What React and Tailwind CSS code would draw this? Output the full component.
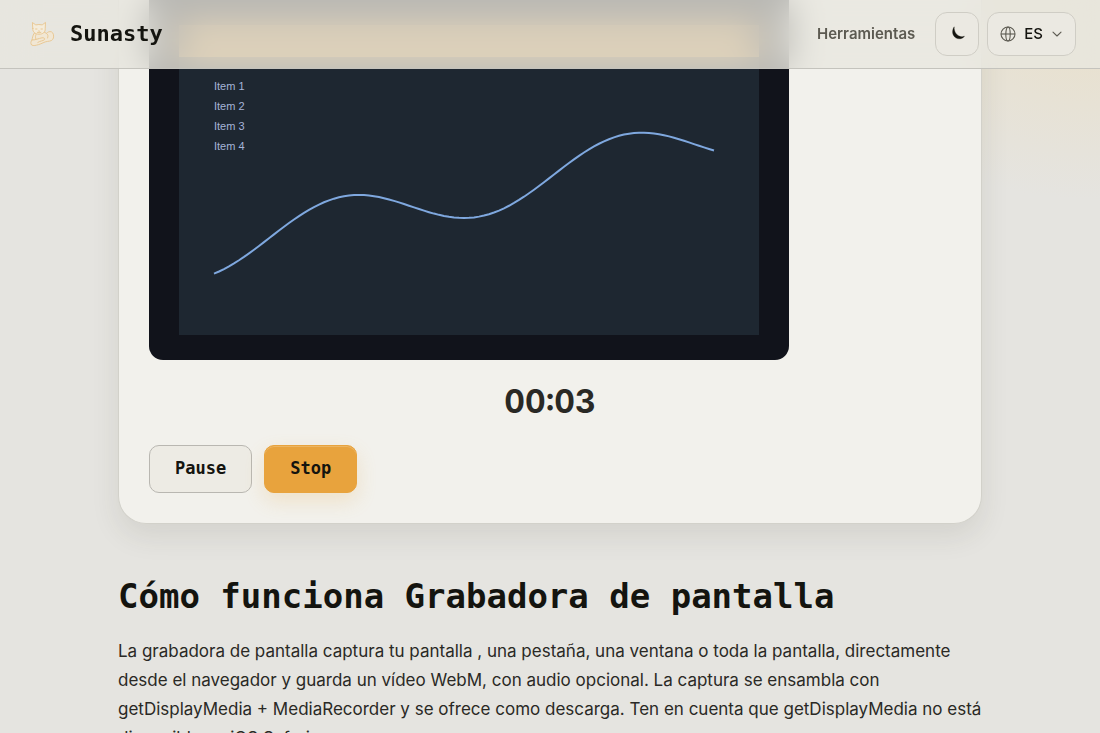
const MENU_ITEMS = ["Item 1", "Item 2", "Item 3", "Item 4"];

const WAVE_POINTS = Array.from({ length: 101 }, (_, i) => {
  const u = i * 5;
  const y = 249.9 - 0.22 * u - 25.1 * Math.sin(0.0222 * u - 1.24);
  return `${u + 2},${(y - 120).toFixed(2)}`;
}).join(" ");

function CatLogo() {
  return (
    <svg viewBox="0 0 28 28" className="size-7" fill="none" stroke="#e8c48c" strokeWidth="0.9" strokeLinecap="round" strokeLinejoin="round" aria-hidden="true">
      <path d="M6 13.500C4.500 16 4.500 18 4 20c-1.200 1.400-1.600 3.600-.4 5 1.800 1.200 4.600.2 7-.4 3.500-1 5.500-2.800 9-3.200 3-.3 5-.8 5.800-3.400.7-2.600-.2-5.400-2-6.200-2-.6-3.800.2-4.800 1.600L16 12Z" fill="#f1e7d4" />
      <path d="M4.800 8.500 4.400 2.500 7.800 4.900q3-.8 6.400 0l3.300-2.500-.3 6.300c.4 3.600-2.500 5.500-6.100 5.500s-6.800-2-6.300-5.700Z" fill="#f4ecdb" />
      <path d="M7.600 9H9M13 9h1.400M10.500 11l.6.500.6-.5M9.300 12.400q1.800.8 3.600 0M8 14.500c-.7 1.500-.7 2.800-.2 4.200M4 20c3.500.2 6.500-1.600 10-2.200 2.400-.3 3.300 1 2.300 2-1.300 1.200-4.300 1-6.500 2.600M18.600 13.400c1.500 1 1.700 3 1 4.600" />
    </svg>
  );
}

function Header() {
  return (
    <header className="sticky top-0 z-10 flex items-center justify-between border-b border-[#c4c3bd] bg-[#e8e7df]/78 px-6 py-3 backdrop-blur-[18px]">
      <a href="#inicio" className="flex items-center gap-3.5 pl-1 font-['DejaVu_Sans_Mono',monospace] text-[22px] leading-8 font-bold text-[#14140f]">
        <CatLogo />
        Sunasty
      </a>
      <nav className="flex items-center gap-2 font-['Inter',sans-serif]">
        <a href="#herramientas" className="mr-3 text-[15px] font-semibold text-[#5c5a51]">Herramientas</a>
        <button type="button" aria-label="Cambiar tema" className="flex size-11 items-center justify-center rounded-xl border border-[#cfcdc5] bg-[#ebe9e2] text-[#14140f]">
          <svg viewBox="0 0 16 16" className="size-4" fill="currentColor" aria-hidden="true">
            <path d="M5.200.8C2.800 4.300 3 9 6.400 11.600c2.900 2 6.900 1.500 9.100-1.400-2.500 1-5.600.4-7.600-1.600C5.900 6.600 4.900 3.600 5.200.8Z" stroke="currentColor" strokeWidth="0.300" />
          </svg>
        </button>
        <button type="button" aria-haspopup="listbox" className="flex h-11 items-center gap-2 rounded-xl border border-[#cfcdc5] bg-[#ebe9e2] px-3 text-[15px] font-medium text-[#14140f]">
          <svg viewBox="0 0 16 16" className="size-4" fill="none" stroke="#5c5a51" strokeWidth="1.100" aria-hidden="true">
            <circle cx="8" cy="8" r="7" />
            <ellipse cx="8" cy="8" rx="2.200" ry="7" />
            <path d="M1 8h14" />
          </svg>
          ES
          <svg viewBox="0 0 12 12" className="size-3" fill="none" stroke="#5c5a51" strokeWidth="1.100" strokeLinecap="round" strokeLinejoin="round" aria-hidden="true">
            <path d="m2 4.200 4 3.800 4-3.800" />
          </svg>
        </button>
      </nav>
    </header>
  );
}

function Preview() {
  return (
    <div className="max-w-[640px] rounded-b-[14px] bg-[#11131b] px-[30px] py-[25px]">
      <div className="bg-[#1e2731]">
        <div className="h-8 bg-[#e8a33d]" />
        <div className="px-[35px] pt-[19px] pb-[55px]">
          <ul className="font-['Liberation_Sans',sans-serif] text-[11px] leading-5 text-[#a5b4d8]">
            {MENU_ITEMS.map((item) => <li key={item}>{item}</li>)}
          </ul>
          <svg viewBox="0 0 504 160" className="-mt-9 -ml-[2px] block w-[504px] max-w-none" fill="none" aria-hidden="true">
            <polyline points={WAVE_POINTS} stroke="#7fa8df" strokeWidth="2" />
          </svg>
        </div>
      </div>
    </div>
  );
}

export default function App() {
  return (
    <div className="min-h-screen bg-[#e5e4e0] bg-[radial-gradient(ellipse_300px_200px_at_top_right,#e8e1cf_0%,#e8e1d0_30%,#e5e4e0_100%)] font-['Inter',sans-serif] text-[#2a2925]">
      <Header />
      <main className="mx-auto -mt-[69px] max-w-[864px]">
        <section className="rounded-b-[28px] border border-t-0 border-[#d2d1ca] bg-[#f2f1ec] px-[30px] pb-[30px] shadow-[0_12px_28px_rgba(60,60,35,0.1)]">
          <Preview />
          <p className="mt-5 text-center text-[32px] leading-11 font-bold tabular-nums">00:03</p>
          <div className="mt-[21px] flex gap-3 font-['DejaVu_Sans_Mono',monospace] text-[17px] font-bold text-[#14140f]">
            <button type="button" className="h-12 rounded-[10px] border border-[#b9b7b1] bg-[#edebe4] px-[25px]">Pause</button>
            <button type="button" className="h-12 rounded-[10px] border border-[#e8a33d] bg-[#e8a33d] px-[25px] shadow-[inset_0_1px_0_rgba(255,255,255,0.2),0_8px_20px_rgba(232,163,61,0.2)]">Stop</button>
          </div>
        </section>
        <article className="pb-16">
          <h2 className="mt-[50px] font-['DejaVu_Sans_Mono',monospace] text-[34px] leading-11 font-bold text-[#14140f]">Cómo funciona Grabadora de pantalla</h2>
          <p className="mt-[19px] text-[17px] leading-[29px]">
            La grabadora de pantalla captura tu pantalla , una pestaña, una ventana o toda la pantalla, directamente desde el navegador y guarda un vídeo WebM, con audio opcional. La captura se ensambla con getDisplayMedia + MediaRecorder y se ofrece como descarga. Ten en cuenta que getDisplayMedia no está disponible en iOS Safari.
          </p>
        </article>
      </main>
    </div>
  );
}
